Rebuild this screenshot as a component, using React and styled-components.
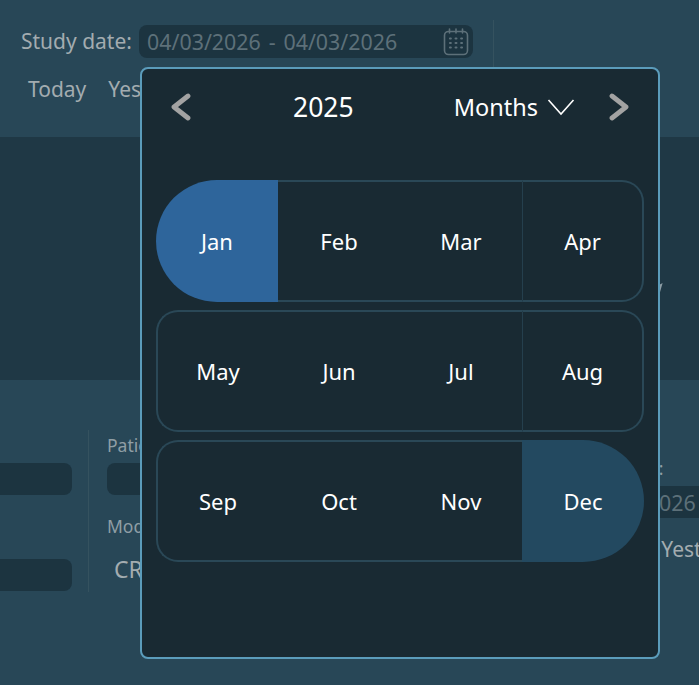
import styled, { createGlobalStyle } from 'styled-components';

const GlobalStyle = createGlobalStyle`
  html, body {
    margin: 0;
    padding: 0;
    background: #284757;
  }
  * {
    box-sizing: border-box;
  }
`;

const monthRows = [
  ['Jan', 'Feb', 'Mar', 'Apr'],
  ['May', 'Jun', 'Jul', 'Aug'],
  ['Sep', 'Oct', 'Nov', 'Dec'],
];

function CalendarIcon() {
  return (
    <svg width="26" height="28" viewBox="0 0 26 28" fill="none" stroke="#5d7079" strokeWidth="1.6" strokeLinecap="round">
      <rect x="1.5" y="3.5" width="23" height="23" rx="4" />
      <path d="M6.5 1v4M13 1v4M19.5 1v4" />
      <path d="M7 10.5h.8M12.6 10.5h.8M18.2 10.5h.8M7 15h.8M12.6 15h.8M18.2 15h.8M7 19.5h.8M12.6 19.5h.8M18.2 19.5h.8" strokeWidth="2.2" />
    </svg>
  );
}

function Chevron({ flip }) {
  return (
    <svg width="20" height="28" viewBox="0 0 20 28" fill="none" stroke="#a3a3a3" strokeWidth="4.8" strokeLinecap="round" strokeLinejoin="round">
      <path d={flip ? 'M3 3l14 11L3 25' : 'M17 3L3 14l14 11'} />
    </svg>
  );
}

function App() {
  return (
    <>
      <GlobalStyle />
      <Page>
        <TopBar>
          <DateFilter>
            <DateRow>
              <FieldLabel>Study date:</FieldLabel>
              <DateInput>
                <DateText>04/03/2026 - 04/03/2026</DateText>
                <CalendarIcon />
              </DateInput>
            </DateRow>
            <Shortcuts>
              <Shortcut>Today</Shortcut>
              <Shortcut>Yesterday</Shortcut>
            </Shortcuts>
          </DateFilter>
          <TopDivider />
        </TopBar>

        <Band />

        <Filters>
          <LeftColumn>
            <BlankInput />
            <BlankInput />
          </LeftColumn>
          <ColumnDivider />
          <MiddleColumn>
            <SmallLabel>Patient name:</SmallLabel>
            <BlankInput />
            <SmallLabel $spaced>Modality:</SmallLabel>
            <ModalityValue>CR</ModalityValue>
          </MiddleColumn>
          <RightColumn>
            <RightLabel>Study date:</RightLabel>
            <RightDateInput>
              <DateText>04/03/2026</DateText>
            </RightDateInput>
            <RightShortcuts>
              <Shortcut>Today</Shortcut>
              <Shortcut>Yesterday</Shortcut>
            </RightShortcuts>
          </RightColumn>
        </Filters>

        <Peek width="4" height="11" viewBox="0 0 4 11">
          <path d="M0.5 11L0 2 3.6 0z" fill="#8d9da5" />
        </Peek>

        <Popover>
          <PopoverHeader>
            <Chevron />
            <Year>2025</Year>
            <ViewSelect>
              Months
              <svg width="28" height="18" viewBox="0 0 28 18" fill="none" stroke="#ffffff" strokeWidth="1.6">
                <path d="M1.5 2L14 16 26.5 2" />
              </svg>
            </ViewSelect>
            <Chevron flip />
          </PopoverHeader>

          <MonthGrid>
            {monthRows.map((row) => (
              <MonthRow key={row[0]}>
                {row.map((month, i) => (
                  <MonthCell
                    key={month}
                    $first={i === 0}
                    $last={i === 3}
                    $start={month === 'Jan'}
                    $end={month === 'Dec'}
                  >
                    {month}
                  </MonthCell>
                ))}
              </MonthRow>
            ))}
          </MonthGrid>
        </Popover>
      </Page>
    </>
  );
}

export default App;


const Page = styled.div`
  position: relative;
  width: 699px;
  height: 685px;
  overflow: hidden;
  background: #284757;
  font-family: 'Noto Sans', 'Liberation Sans', sans-serif;
`;

const TopBar = styled.div`
  display: flex;
  align-items: flex-start;
  height: 137px;
  padding: 20px 0 0 21px;
`;

const DateFilter = styled.div`
  display: flex;
  flex-direction: column;
  padding-top: 5px;
`;

const DateRow = styled.div`
  display: flex;
  align-items: center;
  gap: 8px;
`;

const FieldLabel = styled.span`
  flex: none;
  width: 110px;
  font-size: 21px;
  line-height: 33px;
  color: #a3acb0;
  white-space: nowrap;
`;

const DateInput = styled.div`
  display: flex;
  align-items: center;
  justify-content: space-between;
  width: 334px;
  height: 33px;
  padding: 0 4px 0 8px;
  background: #1c3440;
  border-radius: 8px;
`;

const DateText = styled.span`
  font-size: 21.4px;
  word-spacing: 2.3px;
  color: #5d7079;
  white-space: nowrap;
`;

const Shortcuts = styled.div`
  display: flex;
  gap: 22px;
  margin: 15px 0 0 7px;
`;

const RightShortcuts = styled(Shortcuts)`
  margin-left: 26px;
`;

const Shortcut = styled.span`
  flex: none;
  min-width: 58px;
  font-size: 21px;
  line-height: 33px;
  color: #a3acb0;
`;

const TopDivider = styled.div`
  width: 1px;
  height: 47px;
  margin-left: 20px;
  background: #35525f;
`;

const Band = styled.div`
  height: 243px;
  background: #1f3845;
`;

const Filters = styled.div`
  display: flex;
  align-items: flex-start;
  padding-top: 50px;
`;

const LeftColumn = styled.div`
  display: flex;
  flex-direction: column;
  gap: 64px;
  flex: none;
  width: 112px;
  margin-left: -40px;
  padding-top: 33px;
`;

const BlankInput = styled.div`
  height: 32px;
  background: #1c3440;
  border-radius: 8px;
`;

const ColumnDivider = styled.div`
  flex: none;
  width: 1px;
  height: 162px;
  margin-left: 16px;
  background: #35525f;
`;

const MiddleColumn = styled.div`
  flex: none;
  width: 300px;
  margin-left: 18px;
`;

const SmallLabel = styled.div`
  height: 33px;
  margin-top: ${(p) => (p.$spaced ? '16px' : '0')};
  font-size: 17.5px;
  line-height: 30px;
  color: #8f9ea5;
  white-space: nowrap;
`;

const RightLabel = styled(SmallLabel)`
  margin-left: 16px;
`;

const ModalityValue = styled.div`
  margin-top: 10px;
  padding-left: 7px;
  font-size: 23px;
  line-height: 30px;
  color: #a3acb0;
`;

const RightColumn = styled.div`
  flex: none;
  width: 200px;
  margin-left: 148px;
  padding-top: 23px;
`;

const RightDateInput = styled.div`
  display: flex;
  align-items: center;
  width: 300px;
  height: 32px;
  margin-left: 19px;
  padding-left: 8px;
  background: #1c3440;
`;

const Peek = styled.svg`
  position: absolute;
  left: 659px;
  top: 283px;
`;

const Popover = styled.div`
  position: absolute;
  left: 140px;
  top: 67px;
  width: 520px;
  height: 592px;
  padding: 0 14px;
  background: #192a33;
  border: 2px solid #5b9cbb;
  border-radius: 8px;
`;

const PopoverHeader = styled.div`
  display: flex;
  align-items: center;
  height: 76px;
  padding: 0 15px;
`;

const Year = styled.span`
  margin-left: 102px;
  font-size: 26.5px;
  color: #ffffff;
`;

const ViewSelect = styled.span`
  display: flex;
  align-items: center;
  gap: 9px;
  margin: 0 34px 0 auto;
  font-size: 23.5px;
  color: #ffffff;
`;

const MonthGrid = styled.div`
  display: flex;
  flex-direction: column;
  gap: 8px;
  margin-top: 35px;
`;

const MonthRow = styled.div`
  display: grid;
  grid-template-columns: repeat(4, 1fr);
  height: 122px;
`;

const outline = '2px solid #2a4857';

const MonthCell = styled.div`
  display: flex;
  align-items: center;
  justify-content: center;
  font-size: 22px;
  color: #ffffff;
  background: ${(p) => (p.$start ? '#2e659b' : p.$end ? '#234960' : 'transparent')};
  border-top: ${(p) => (p.$start || p.$end ? 'none' : outline)};
  border-bottom: ${(p) => (p.$start || p.$end ? 'none' : outline)};
  border-left: ${(p) => (p.$first && !p.$start ? outline : p.$last && !p.$end ? '1px solid #253f4d' : 'none')};
  border-right: ${(p) => (p.$last && !p.$end ? outline : 'none')};
  border-radius: ${(p) => {
    if (p.$start) return '61px 0 0 61px';
    if (p.$end) return '0 61px 61px 0';
    if (p.$first) return '22px 0 0 22px';
    if (p.$last) return '0 22px 22px 0';
    return '0';
  }};
`;
